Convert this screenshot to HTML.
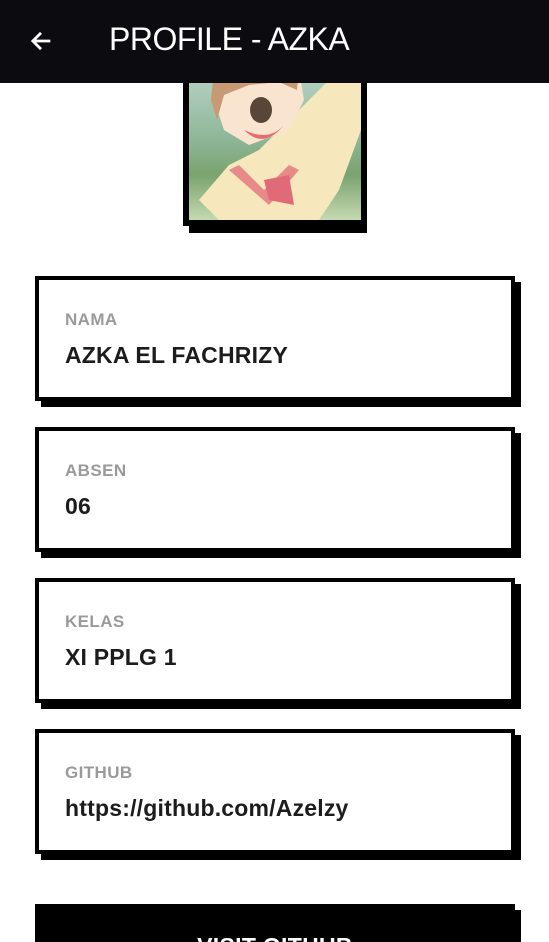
<!DOCTYPE html>
<html><head><style>
html{width:549px;height:942px;overflow:hidden}
body{margin:0;width:549px;height:942px;overflow:hidden;background:#fff;font-family:"Liberation Sans",sans-serif;position:relative}
.hdr{position:absolute;left:0;top:0;width:549px;height:83px;background:#0b0b10;color:#fff}
.hdr .t{position:absolute;left:109px;top:21px;font-size:32px;letter-spacing:-0.5px}
.img{position:absolute;left:183px;top:70px;width:178px;height:156px;background:#000;box-shadow:6px 7px 0 #000}
.pic{position:absolute;left:6px;top:0;width:172px;height:150px;background:linear-gradient(180deg,#b9d3c5 0%,#8fb79a 45%,#7aa36f 70%,#c5d9b0 100%)}
.card{position:absolute;left:35px;width:472px;height:117px;border:4px solid #000;background:#fff;box-shadow:6px 6px 0 #000}
.lab{position:absolute;left:26px;top:30px;font-size:17px;font-weight:bold;color:#9a9a9a;letter-spacing:0.4px}
.val{position:absolute;left:26px;top:62px;font-size:23px;font-weight:bold;color:#1c1c1c;letter-spacing:0.2px}
.btn{position:absolute;left:35px;top:904px;width:480px;height:38px;background:#000;box-shadow:6px 6px 0 #000;color:#fff;text-align:center;font-size:23px;font-weight:bold;line-height:84px;letter-spacing:0.3px;overflow:hidden}
</style></head><body>
<div class="img"><div class="pic">
<svg width="172" height="150" viewBox="0 0 172 150" style="position:absolute;left:0;top:0">
<path d="M150 0 L172 0 L172 60 L150 120 L130 150 L30 150 L10 130 L40 95 L70 80 Z" fill="#f6e7bd"/>
<path d="M30 0 L110 0 L115 30 L100 60 L60 75 L35 60 L25 30 Z" fill="#f9e4cf"/>
<path d="M25 0 L110 0 L108 20 L90 12 L60 15 L35 25 L28 50 L22 30 Z" fill="#c79a73"/>
<ellipse cx="72" cy="40" rx="11" ry="13" fill="#5a4636"/>
<path d="M55 60 Q75 80 95 55 Q80 72 55 60 Z" fill="#e56d6d"/>
<path d="M50 95 L75 120 L100 95 L110 100 L80 135 L40 100 Z" fill="#e88a8a"/>
<path d="M75 110 L100 105 L105 135 L80 130 Z" fill="#e06a78"/>
</svg></div></div>
<div class="hdr">
<svg width="28" height="28" viewBox="0 0 24 24" style="position:absolute;left:27px;top:27px"><path d="M20 12H5M12 5l-7 7 7 7" fill="none" stroke="#fff" stroke-width="2.4"/></svg>
<div class="t">PROFILE - AZKA</div></div>
<div class="card" style="top:276px"><div class="lab">NAMA</div><div class="val">AZKA EL FACHRIZY</div></div>
<div class="card" style="top:427px"><div class="lab">ABSEN</div><div class="val">06</div></div>
<div class="card" style="top:578px"><div class="lab">KELAS</div><div class="val">XI PPLG 1</div></div>
<div class="card" style="top:729px"><div class="lab">GITHUB</div><div class="val">https://github.com/Azelzy</div></div>
<div class="btn">VISIT GITHUB</div>
</body></html>
